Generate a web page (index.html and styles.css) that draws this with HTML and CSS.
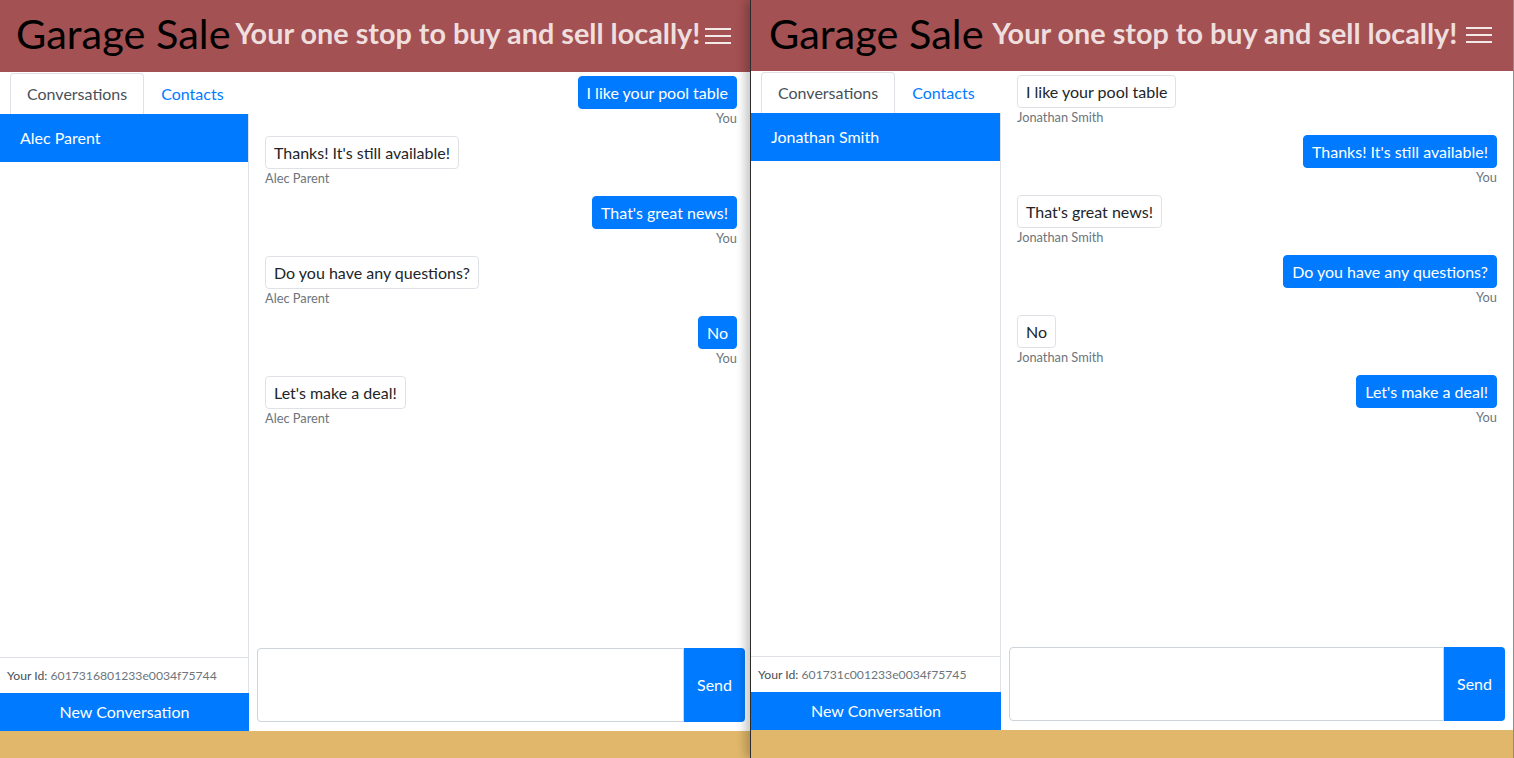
FILE: index.html
```html
<!DOCTYPE html>
<html lang="en">
<head>
<meta charset="utf-8">
<title>Garage Sale</title>
<link rel="stylesheet" href="styles.css">
</head>
<body>
<div class="desktop">
  <section class="window window-left">
    <header class="navbar">
      <span class="brand">Garage Sale</span>
      <span class="tagline">Your one stop to buy and sell locally!</span>
      <svg class="toggler" viewBox="0 0 26 18" aria-hidden="true"><path d="M0 2H26M0 9H26M0 16H26" stroke="#f3e9e9" stroke-width="2" fill="none"/></svg>
    </header>
    <div class="app">
      <aside class="side">
        <ul class="tabs">
          <li class="tab active">Conversations</li>
          <li class="tab">Contacts</li>
        </ul>
        <div class="side-box">
          <div class="list">
            <div class="item">Alec Parent</div>
          </div>
          <div class="myid"><span class="myid-label">Your Id:</span> <span class="myid-val">6017316801233e0034f75744</span></div>
        </div>
        <button class="new-conv" type="button">New Conversation</button>
      </aside>
      <main class="chat">
        <div class="messages">
          <div class="msg mine"><div class="bubble">I like your pool table</div><div class="who">You</div></div>
          <div class="msg"><div class="bubble">Thanks! It's still available!</div><div class="who">Alec Parent</div></div>
          <div class="msg mine"><div class="bubble">That's great news!</div><div class="who">You</div></div>
          <div class="msg"><div class="bubble">Do you have any questions?</div><div class="who">Alec Parent</div></div>
          <div class="msg mine"><div class="bubble">No</div><div class="who">You</div></div>
          <div class="msg"><div class="bubble">Let's make a deal!</div><div class="who">Alec Parent</div></div>
        </div>
        <form class="composer">
          <textarea class="input"></textarea>
          <button class="send" type="button">Send</button>
        </form>
      </main>
    </div>
  </section>

  <section class="window window-right">
    <header class="navbar">
      <span class="brand">Garage Sale</span>
      <span class="tagline">Your one stop to buy and sell locally!</span>
      <svg class="toggler" viewBox="0 0 26 18" aria-hidden="true"><path d="M0 2H26M0 9H26M0 16H26" stroke="#f3e9e9" stroke-width="2" fill="none"/></svg>
    </header>
    <div class="app">
      <aside class="side">
        <ul class="tabs">
          <li class="tab active">Conversations</li>
          <li class="tab">Contacts</li>
        </ul>
        <div class="side-box">
          <div class="list">
            <div class="item">Jonathan Smith</div>
          </div>
          <div class="myid"><span class="myid-label">Your Id:</span> <span class="myid-val">601731c001233e0034f75745</span></div>
        </div>
        <button class="new-conv" type="button">New Conversation</button>
      </aside>
      <main class="chat">
        <div class="messages">
          <div class="msg"><div class="bubble">I like your pool table</div><div class="who">Jonathan Smith</div></div>
          <div class="msg mine"><div class="bubble">Thanks! It's still available!</div><div class="who">You</div></div>
          <div class="msg"><div class="bubble">That's great news!</div><div class="who">Jonathan Smith</div></div>
          <div class="msg mine"><div class="bubble">Do you have any questions?</div><div class="who">You</div></div>
          <div class="msg"><div class="bubble">No</div><div class="who">Jonathan Smith</div></div>
          <div class="msg mine"><div class="bubble">Let's make a deal!</div><div class="who">You</div></div>
        </div>
        <form class="composer">
          <textarea class="input"></textarea>
          <button class="send" type="button">Send</button>
        </form>
      </main>
    </div>
  </section>
</div>
</body>
</html>
```

FILE: styles.css
```css
* { box-sizing: border-box; }
html, body { margin: 0; padding: 0; }
body {
  width: 1514px;
  height: 758px;
  overflow: hidden;
  background: #ffffff;
  font-family: "Segoe UI", Lato, "Liberation Sans", sans-serif;
  font-size: 16px;
  line-height: 1.5;
  color: #212529;
}
.desktop { display: flex; height: 758px; }

.window {
  display: flex;
  flex-direction: column;
  height: 758px;
  background: #e1b86b;
  flex: none;
}
.window-left { width: 753px; }
.window-right {
  width: 764px;
  margin-left: -3px;
  border-left: 1px solid #2b2b2b;
  border-right: 1px solid #8c8c8c;
  box-shadow: -5px 0 9px rgba(0, 0, 0, 0.22);
  position: relative;
  z-index: 1;
}

/* header */
.navbar {
  flex: none;
  height: 72px;
  background: #a35152;
  display: flex;
  align-items: center;
  justify-content: space-between;
  padding: 0 22px 6px 16px;
}
.window-right .navbar { height: 71px; padding: 0 21px 6px 18px; }
.brand { font-size: 41.5px; line-height: 48px; color: #000; font-weight: 400; }
.tagline { font-size: 28.8px; line-height: 36px; font-weight: 700; color: #efdede; }
.toggler { width: 26px; height: 18px; flex: none; margin-top: 5px; }

/* app body */
.app { flex: none; height: 659px; display: flex; background: #fff; }
.side { flex: none; width: 249px; display: flex; flex-direction: column; }
.window-right .side { width: 250px; }

.tabs { display: flex; list-style: none; margin: 0; padding: 1px 0 0 10px; }
.tab {
  padding: 8px 16px;
  line-height: 24px;
  border: 1px solid transparent;
  border-bottom: 0;
  border-radius: 4px 4px 0 0;
  color: #007bff;
}
.tab.active { color: #495057; border-color: #dee2e6; }

.side-box { flex: 1; display: flex; flex-direction: column; border-right: 1px solid #dee2e6; }
.list { flex: 1; }
.item { padding: 12px 20px; line-height: 24px; background: #007bff; color: #fff; }
.myid {
  height: 36px;
  border-top: 1px solid #dee2e6;
  padding: 8px 7px;
  font-size: 12.2px;
  line-height: 19px;
  white-space: nowrap;
}
.myid-label { color: #495057; }
.myid-val { color: #6c757d; }

.new-conv {
  flex: none;
  height: 38px;
  width: 100%;
  border: 0;
  margin: 0;
  background: #007bff;
  color: #fff;
  font: inherit;
  line-height: 24px;
}

/* chat */
.chat { flex: 1; min-width: 0; display: flex; flex-direction: column; }
.messages { flex: 1; display: flex; flex-direction: column; padding: 4px 16px 0 16px; }
.msg { display: flex; flex-direction: column; align-items: flex-start; height: 51px; margin-bottom: 9px; }
.msg.mine { align-items: flex-end; }
.bubble {
  height: 33px;
  padding: 4px 8px;
  line-height: 23px;
  border: 1px solid #dee2e6;
  border-radius: 4px;
  background: #fff;
  color: #212529;
}
.mine .bubble { background: #007bff; border-color: #007bff; color: #fff; }
.who { font-size: 12.8px; line-height: 19px; color: #6c757d; }

.composer { flex: none; display: flex; margin: 0; padding: 8px 8px 9px; }
.input {
  flex: 1;
  height: 74px;
  margin: 0;
  border: 1px solid #ced4da;
  border-radius: 4px 0 0 4px;
  resize: none;
  font: inherit;
}
.send {
  flex: none;
  width: 61px;
  height: 74px;
  margin: 0;
  border: 0;
  border-radius: 0 4px 4px 0;
  background: #007bff;
  color: #fff;
  font: inherit;
}
```
